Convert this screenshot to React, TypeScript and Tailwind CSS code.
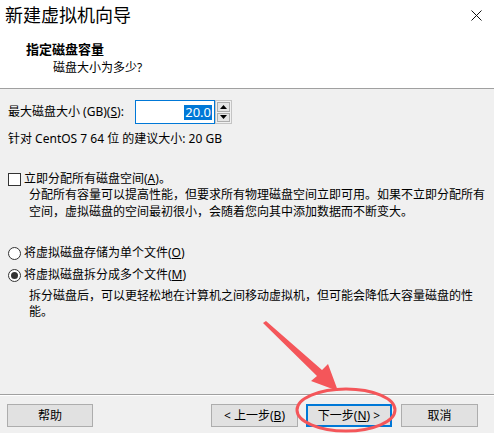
import React from "react";

function Btn({ children, className }: { children: React.ReactNode; className: string }) {
  return (
    <button className={`flex h-[23px] items-center justify-center bg-[#e1e1e1] text-[12px] leading-[14px] ${className}`}>
      {children}
    </button>
  );
}

export default function App() {
  return (
    <div className="relative flex h-[433px] w-[494px] flex-col overflow-hidden bg-[#f0f0f0] font-['Segoe_UI','Noto_Sans','Microsoft_YaHei','Noto_Sans_CJK_SC',sans-serif] text-[12px] text-black">
      <header className="h-[89px] border-b border-[#a0a0a0] bg-white">
        <div className="flex h-[30px] items-center justify-between pl-[5px] pr-[12px]">
          <span className="text-[18px] leading-[24px]">新建虚拟机向导</span>
          <svg width="11" height="11" viewBox="0 0 11 11">
            <path d="M0.5 0.5L10.5 10.5M10.5 0.5L0.5 10.5" stroke="#111" strokeWidth="1" />
          </svg>
        </div>
        <div className="mt-[10px] pl-[26px] text-[13px] font-bold leading-[18px]">指定磁盘容量</div>
        <div className="mt-[2px] pl-[53px] leading-[16px]">磁盘大小为多少?</div>
      </header>

      <main className="flex-1 pl-[8px]">
        <div className="mt-[11px] flex h-[24px] items-center">
          <span className="w-[127px] leading-[16px]">
            最大磁盘大小 (GB)(<span className="underline">S</span>):
          </span>
          <div className="flex h-[24px] w-[80px] items-center justify-end border border-[#0078d7] bg-white pr-[2px]">
            <span className="bg-[#0078d7] px-[1px] text-[13px] leading-[15px] text-white">20.0</span>
          </div>
          <div className="flex h-[24px] w-[17px] flex-col gap-[1px] border border-[#c4c4c4] bg-[#f0f0f0] p-[1px]">
            <div className="flex flex-1 items-center justify-center border border-[#adadad] bg-[#e5e5e5]">
              <svg width="7" height="4" viewBox="0 0 7 4"><path d="M3.5 0L7 4H0Z" fill="#000" /></svg>
            </div>
            <div className="flex flex-1 items-center justify-center border border-[#adadad] bg-[#e5e5e5]">
              <svg width="7" height="4" viewBox="0 0 7 4"><path d="M0 0H7L3.5 4Z" fill="#000" /></svg>
            </div>
          </div>
        </div>

        <div className="mt-[7px] leading-[16px]">针对 CentOS 7 64 位 的建议大小: 20 GB</div>

        <div className="mt-[25px] flex h-[14px] items-center">
          <span className="h-[13px] w-[13px] border border-[#333] bg-white" />
          <span className="ml-[3px] leading-[14px]">
            立即分配所有磁盘空间(<span className="underline">A</span>)。
          </span>
        </div>
        <p className="pl-[21px] leading-[17px]">
          分配所有容量可以提高性能，但要求所有物理磁盘空间立即可用。如果不立即分配所有
          <br />
          空间，虚拟磁盘的空间最初很小，会随着您向其中添加数据而不断变大。
        </p>

        <div className="mt-[25px] flex h-[16px] items-center">
          <span className="h-[13px] w-[13px] rounded-full border border-[#333] bg-white" />
          <span className="ml-[3px] leading-[16px]">
            将虚拟磁盘存储为单个文件(<span className="underline">O</span>)
          </span>
        </div>
        <div className="mt-[6px] flex h-[16px] items-center">
          <span className="flex h-[13px] w-[13px] items-center justify-center rounded-full border border-[#333] bg-white">
            <span className="h-[7px] w-[7px] rounded-full bg-[#333]" />
          </span>
          <span className="ml-[3px] leading-[16px]">
            将虚拟磁盘拆分成多个文件(<span className="underline">M</span>)
          </span>
        </div>
        <p className="mt-[5px] pl-[21px] leading-[16px]">
          拆分磁盘后，可以更轻松地在计算机之间移动虚拟机，但可能会降低大容量磁盘的性
          <br />
          能。
        </p>
      </main>

      <footer className="h-[39px] border-t border-[#a0a0a0]">
        <div className="flex h-full border-t border-white pl-[7px] pt-[8px]">
          <Btn className="w-[86px] border border-[#adadad]">帮助</Btn>
          <Btn className="ml-[118px] w-[87px] border border-[#adadad]">
            &lt; 上一步(<span className="underline">B</span>)
          </Btn>
          <Btn className="ml-[8px] w-[86px] border-2 border-[#0078d7]">
            下一步(<span className="underline">N</span>) &gt;
          </Btn>
          <Btn className="ml-[9px] w-[77px] border border-[#adadad]">取消</Btn>
        </div>
      </footer>

      <svg className="pointer-events-none absolute inset-0" width="494" height="433" viewBox="0 0 494 433">
        <ellipse cx="346" cy="410" rx="49" ry="21" fill="none" stroke="#f4565a" strokeWidth="3" />
        <polygon
          points="263,323 266,321 322,370 328,364 338,391 311,381 317,376"
          fill="#f4565a"
        />
      </svg>
    </div>
  );
}
